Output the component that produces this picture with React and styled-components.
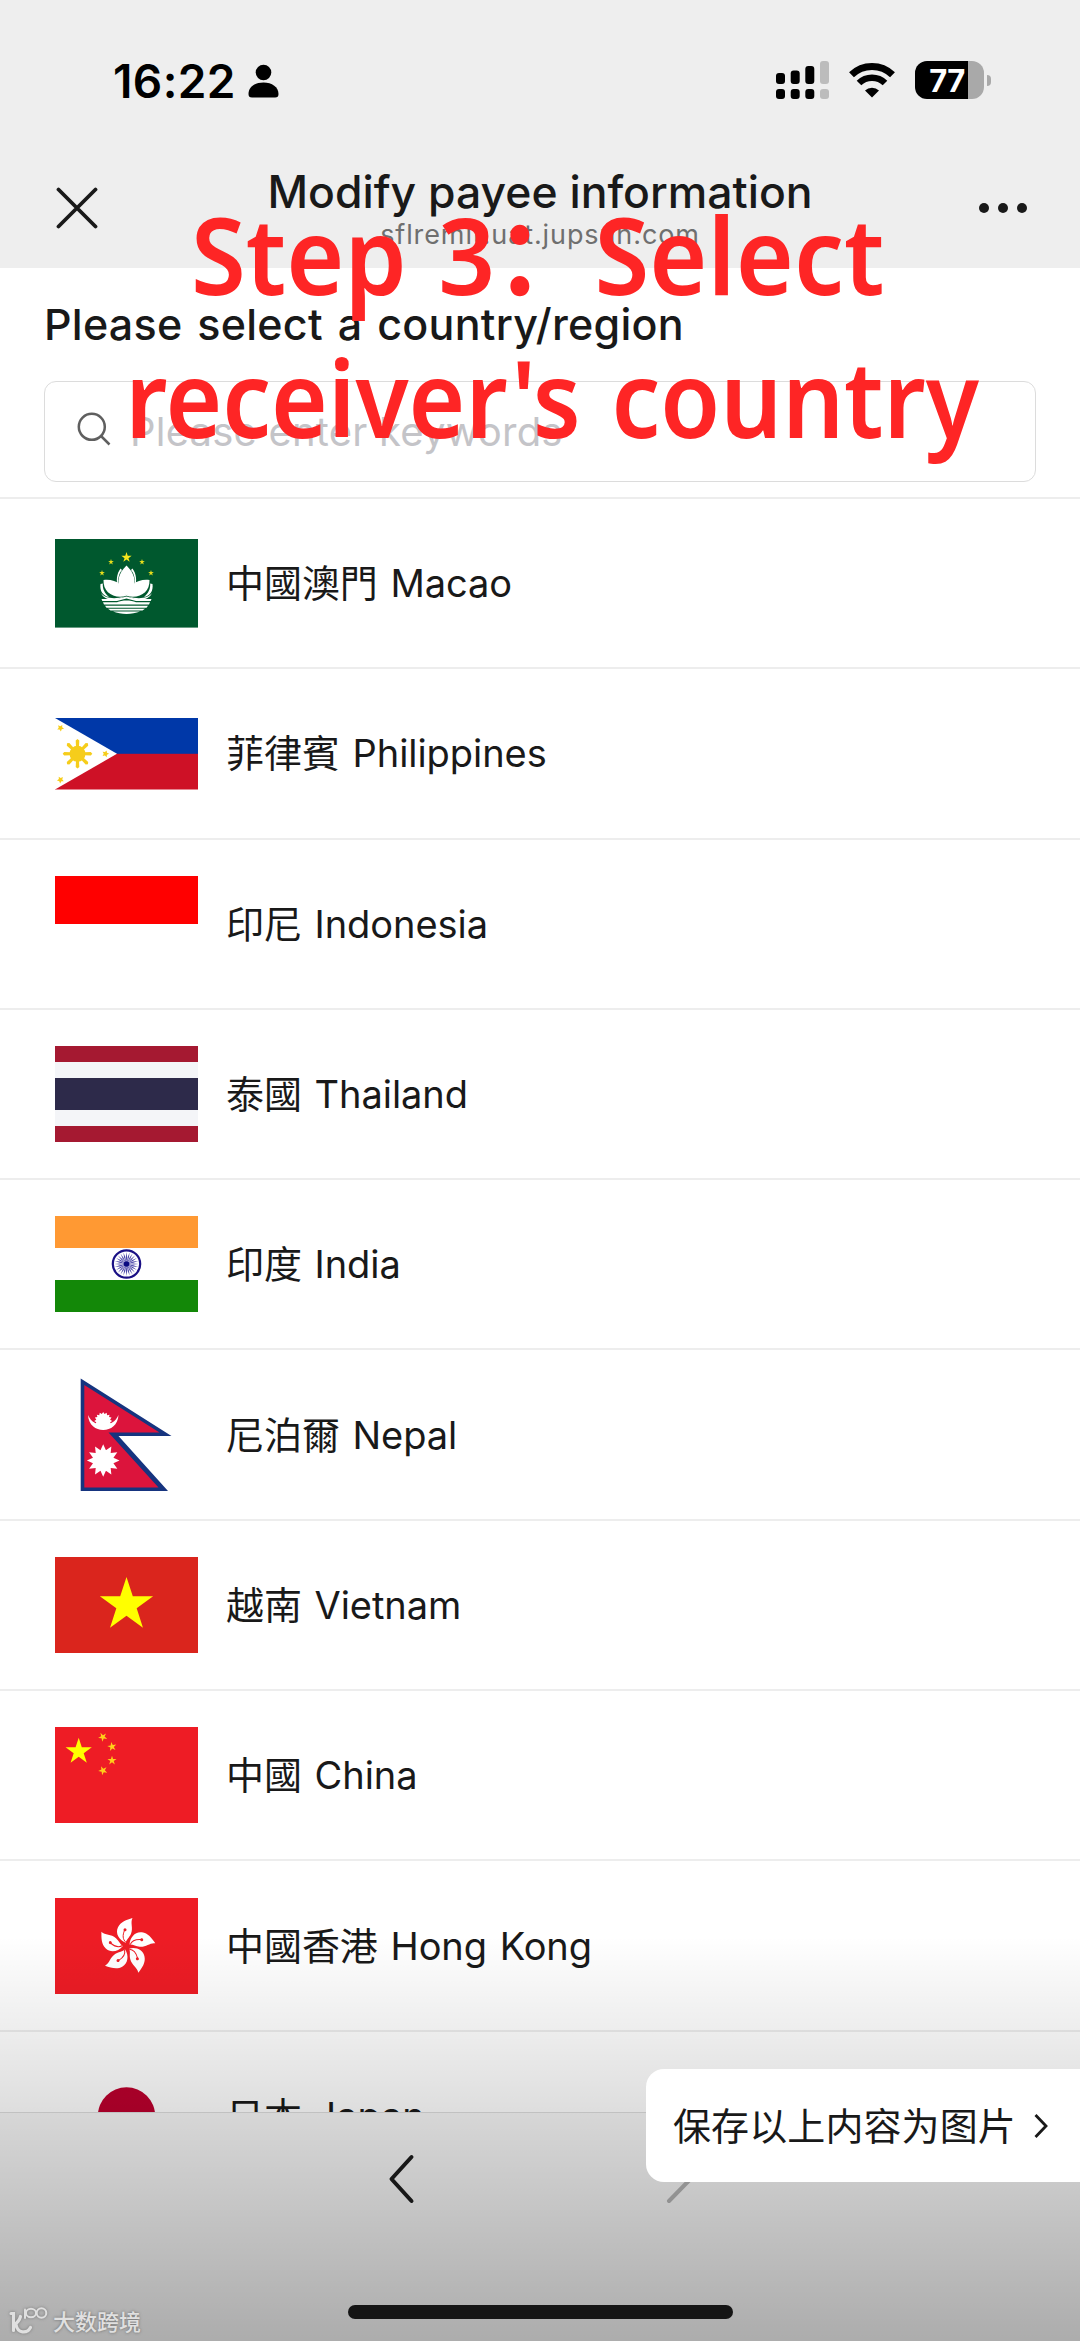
import React from "react";
import styled, { createGlobalStyle } from "styled-components";

const GlobalStyle = createGlobalStyle`
  * { box-sizing: border-box; }
  body { margin: 0; background: #fff; }
`;

const latin = `Inter, "Noto Sans CJK TC", sans-serif`;

const Screen = styled.div`
  position: relative;
  display: flex;
  flex-direction: column;
  width: 1080px;
  height: 2341px;
  overflow: hidden;
  background: #fff;
  color: #191919;
  font-family: ${latin};
`;

/* ---------- top chrome ---------- */

const TopChrome = styled.header`
  flex: none;
  height: 268px;
  padding-top: 58px;
  background: #eeeeee;
`;

const StatusBar = styled.div`
  display: flex;
  align-items: center;
  justify-content: space-between;
  height: 46px;
  padding: 0 89px 0 113px;
  color: #000;
`;

const StatusGroup = styled.div`
  display: flex;
  align-items: center;
  gap: ${(p) => p.$gap}px;
  padding-bottom: ${(p) => p.$lift || 0}px;
`;

const Clock = styled.span`
  font-size: 46px;
  line-height: 46px;
  font-weight: 600;
  letter-spacing: 0.4px;
`;

const Battery = styled.div`
  display: flex;
  align-items: center;
  gap: 3px;
`;

const BatteryBody = styled.div`
  display: flex;
  align-items: center;
  justify-content: center;
  width: 69px;
  height: 38px;
  padding-right: 5px;
  border-radius: 12px;
  background: linear-gradient(to right, #000 53px, #a9a9a9 53px);
  color: #fff;
  font-size: 31px;
  font-weight: 700;
  letter-spacing: -0.5px;
`;

const BatteryCap = styled.div`
  width: 4px;
  height: 11px;
  border-radius: 0 5px 5px 0;
  background: #a9a9a9;
`;

const NavBar = styled.div`
  display: grid;
  grid-template-columns: 160px 1fr 160px;
  height: 104px;
  margin-top: 54px;
`;

const NavSide = styled.div`
  display: flex;
  justify-content: ${(p) => (p.$end ? "flex-end" : "flex-start")};
  padding: ${(p) => (p.$end ? "44px 52px 0 0" : "29px 0 0 56px")};
`;

const NavCenter = styled.div`
  display: flex;
  flex-direction: column;
  align-items: center;
`;

const NavTitle = styled.h1`
  margin: 7px 0 0;
  font-size: 44.5px;
  line-height: 54px;
  font-weight: 500;
  letter-spacing: 0;
  white-space: nowrap;
`;

const NavHost = styled.span`
  margin-top: -1px;
  font-size: 27px;
  line-height: 34px;
  font-weight: 400;
  letter-spacing: 0.9px;
  color: #6f6f6f;
`;

/* ---------- page body ---------- */

const Body = styled.main`
  flex: none;
  height: 1844px;
  overflow: hidden;
`;

const Finder = styled.section`
  height: 229px;
  padding: 28px 44px 0;
`;

const Prompt = styled.h2`
  margin: 0;
  font-size: 43px;
  line-height: 56px;
  font-weight: 500;
  letter-spacing: 0.25px;
  word-spacing: 3.2px;
  white-space: nowrap;
`;

const SearchBox = styled.div`
  display: flex;
  align-items: center;
  gap: 19px;
  height: 101px;
  margin-top: 29px;
  padding-left: 32px;
  border: 1px solid #dcdcdc;
  border-radius: 12px;

  svg { margin-bottom: 5px; }
`;

const Placeholder = styled.span`
  font-size: 40px;
  line-height: 50px;
  letter-spacing: 0.2px;
  color: #c4c4c8;
`;

const Row = styled.div`
  display: flex;
  align-items: center;
  gap: 28px;
  height: 170.3px;
  padding-left: 55px;
  border-top: 2px solid #ededed;
`;

const FlagSvg = styled.svg`
  display: block;
  flex: none;
  overflow: visible;
`;

const Country = styled.span`
  font-size: 38px;
  line-height: 50px;
  word-spacing: 2px;
  letter-spacing: -0.05px;
  white-space: pre;
`;

/* ---------- bottom chrome ---------- */

const Toolbar = styled.footer`
  display: flex;
  flex-direction: column;
  align-items: center;
  justify-content: space-between;
  height: 229px;
  padding: 41px 0 22px;
  border-top: 1px solid #dedede;
  background: #f7f7f7;
`;

const HistoryButtons = styled.div`
  display: flex;
  gap: 251px;
`;

const HomeIndicator = styled.div`
  width: 385px;
  height: 14px;
  border-radius: 7px;
  background: #1d1d1d;
`;

/* ---------- things floating over the page ---------- */

const Shade = styled.div`
  position: absolute;
  left: 0;
  right: 0;
  bottom: 0;
  height: 405px;
  background: linear-gradient(to bottom, rgba(0, 0, 0, 0), rgba(0, 0, 0, 0.3));
`;

const SavePill = styled.div`
  position: absolute;
  right: 0;
  top: 2069px;
  display: flex;
  align-items: center;
  justify-content: space-between;
  width: 434px;
  height: 113px;
  padding: 0 31px 0 27px;
  border-radius: 18px 0 0 18px;
  background: #fff;
`;

const PillLabel = styled.span`
  padding-bottom: 5px;
  font-family: "Noto Sans CJK SC", sans-serif;
  font-size: 38px;
  letter-spacing: 0.1px;
  white-space: nowrap;
`;

const Caption = styled.div`
  position: absolute;
  left: 0;
  right: 0;
  top: 182px;
  display: flex;
  flex-direction: column;
  align-items: center;
  color: #fe2525;
  font-family: "Noto Sans", "Noto Sans CJK SC", sans-serif;
  font-size: 107px;
  font-weight: 600;
  line-height: 143px;
`;

const CaptionLine = styled.div`
  white-space: pre;
  word-spacing: ${(p) => p.$wordGap}px;
  transform: translateX(${(p) => p.$shift}px) scaleX(${(p) => p.$squeeze});
`;

const Watermark = styled.div`
  position: absolute;
  left: 9px;
  top: 2303px;
  display: flex;
  align-items: center;
  gap: 4px;
  color: #e0e0e0;
  font-family: "Noto Sans CJK SC", sans-serif;
  font-size: 22px;
  font-weight: 500;
  line-height: 34px;
  text-shadow: 0 0 3px #666;

  svg { filter: drop-shadow(0 0 1.5px #777); }
`;

/* ---------- drawings ---------- */

function star(cx, cy, r, n = 5, inner = 0.382, rot = -90) {
  return Array.from({ length: n * 2 }, (_, i) => {
    const a = ((rot + (i * 180) / n) * Math.PI) / 180;
    const q = i % 2 ? r * inner : r;
    return `${(cx + q * Math.cos(a)).toFixed(2)},${(cy + q * Math.sin(a)).toFixed(2)}`;
  }).join(" ");
}

const Star = ({ x, y, r, n, inner, rot, fill }) => (
  <polygon points={star(x, y, r, n, inner, rot)} fill={fill} />
);

const Macao = () => (
  <>
    <rect width="143" height="88.6" fill="#00582e" />
    <Star x={71.5} y={18.5} r={5.4} fill="#f8e71c" />
    {[[56, 23], [87, 23], [47, 34], [96, 34]].map(([x, y]) => (
      <Star key={x} x={x} y={y} r={3} fill="#e6dd1c" />
    ))}
    <g fill="#fff">
      <path d="M71.500 26.500C63.500 34 61.500 43 65 50L71.500 57L78 50C81.500 43 79.500 34 71.500 26.500Z" />
      <path d="M65.500 29.500C61.500 35 61 42 63 48C62.500 41 63.500 35 67 31Z" />
      <path d="M77.500 29.500C81.500 35 82 42 80 48C80.500 41 79.500 35 76 31Z" />
      <path d="M48.500 41C48 53 58 60 71 57C70.500 46 60 39.500 48.500 41Z" />
      <path d="M94.500 41C95 53 85 60 72 57C72.500 46 83 39.500 94.500 41Z" />
      <path d="M45.500 45C44.500 52 48 57 54 58C49.500 54 47.500 50 47.800 44.500Z" />
      <path d="M97.500 45C98.500 52 95 57 89 58C93.500 54 95.500 50 95.200 44.500Z" />
      <path d="M46 54C50 59.500 60 60.500 69 57.500C60 63 49 61.500 46 54Z" />
      <path d="M97 54C93 59.500 83 60.500 74 57.500C83 63 94 61.500 97 54Z" />
      <path d="M46.500 60H62L71.500 57.500L81 60H96.500L95.700 62H81L71.500 59.500L62 62H47.300Z" />
      <path d="M48 63.300H62C67 61 76 61 81 63.300H95L94 65.500H49Z" />
      <path d="M50 66.700H93L91.500 68.700H51.500Z" />
      <path d="M53 69.800H90L87.500 71.600H55.500Z" />
      <path d="M58 72.600H85C77 75.900 66 75.900 58 72.600Z" />
    </g>
  </>
);

const Philippines = () => (
  <>
    <rect width="143" height="36" fill="#0038a8" />
    <rect y="35.800" width="143" height="35.700" fill="#ce1126" />
    <path d="M0 0L62 35.800L0 71.500Z" fill="#fff" />
    <circle cx="22.500" cy="35.800" r="8" fill="#f6cd1b" />
    {Array.from({ length: 8 }, (_, i) => (
      <path
        key={i}
        d="M21 29L20.700 22.500L22.500 21L24.300 22.500L24 29Z"
        fill="#f6cd1b"
        transform={`rotate(${i * 45} 22.500 35.800)`}
      />
    ))}
    <Star x={5.5} y={10} r={3.6} inner={0.5} fill="#f6cd1b" rot={-60} />
    <Star x={5.5} y={61.8} r={3.6} inner={0.5} fill="#f6cd1b" rot={-120} />
    <Star x={50.5} y={35.8} r={3.6} inner={0.5} fill="#f6cd1b" rot={0} />
  </>
);

const Indonesia = () => <rect width="143" height="48" fill="#ff0000" />;

const Thailand = () => (
  <>
    <rect width="143" height="96" fill="#a51931" />
    <rect y="16" width="143" height="64" fill="#f4f5f8" />
    <rect y="32" width="143" height="32" fill="#2d2a4a" />
  </>
);

const India = () => (
  <>
    <rect width="143" height="32" fill="#ff9933" />
    <rect y="64" width="143" height="32" fill="#138808" />
    <circle cx="71.500" cy="48" r="13.700" fill="none" stroke="#1a1085" strokeWidth="2.200" />
    {Array.from({ length: 24 }, (_, i) => (
      <path
        key={i}
        d="M71.500 48L70.900 41L71.500 36L72.100 41Z"
        fill="#4a46a8"
        transform={`rotate(${i * 15} 71.500 48)`}
      />
    ))}
    <circle cx="71.500" cy="48" r="2.800" fill="#0a0a80" />
  </>
);

const Nepal = () => (
  <>
    <path d="M25.700 -0.500L116.500 57H63.500L113 112H25.700Z" fill="#16347f" />
    <path d="M29.300 6L104.500 53.600H53.500L103.500 108.600H29.300Z" fill="#dc143c" />
    <path d="M33 36C34 56 62.500 56 63.500 36C58 49.500 38.500 49.500 33 36Z" fill="#fff" />
    <Star x={48.2} y={42} r={9} n={16} inner={0.78} fill="#fff" />
    <Star x={48.2} y={81.5} r={16.3} n={12} inner={0.65} fill="#fff" />
  </>
);

const Vietnam = () => (
  <>
    <rect width="143" height="96" fill="#da251d" />
    <Star x={71.5} y={48} r={28} fill="#ffff00" />
  </>
);

const China = () => (
  <>
    <rect width="143" height="96" fill="#ee1c25" />
    <Star x={23.7} y={24.5} r={13.8} fill="#ffff00" />
    <Star x={47.8} y={10} r={4.8} rot={-120} fill="#ffcf1a" />
    <Star x={57} y={19.7} r={4.8} rot={-100} fill="#ffcf1a" />
    <Star x={57} y={33.5} r={4.8} fill="#ffcf1a" />
    <Star x={48} y={43.5} r={4.8} rot={-115} fill="#ffcf1a" />
  </>
);

const HongKong = () => (
  <>
    <rect width="143" height="96" fill="#ee1c25" />
    {Array.from({ length: 5 }, (_, i) => (
      <g key={i} transform={`translate(71.500 48.300) rotate(${i * 72})`}>
        <path
          d="M-.8 -3.500C-7.500 -6 -11.500 -13 -8.500 -19C-6 -24.500 0 -26.500 6 -28.300C3.500 -23.500 7 -18.500 4.500 -12.500C2.800 -8.500 0 -7 -.8 -3.500Z"
          fill="#fff"
        />
        <path d="M-.5 -4C-4 -7 -4 -11 -2 -16" fill="none" stroke="#ee1c25" strokeWidth="1" />
        <circle cx="-1.500" cy="-16.500" r="1.500" fill="#ee1c25" />
      </g>
    ))}
  </>
);

const Japan = () => <circle cx="71.500" cy="48" r="28.700" fill="#bc002d" />;

const COUNTRIES = [
  { label: "中國澳門 Macao", Flag: Macao, h: 88.6 },
  { label: "菲律賓 Philippines", Flag: Philippines, h: 71.5 },
  { label: "印尼 Indonesia", Flag: Indonesia, h: 96 },
  { label: "泰國 Thailand", Flag: Thailand, h: 96 },
  { label: "印度 India", Flag: India, h: 96 },
  { label: "尼泊爾 Nepal", Flag: Nepal, h: 112 },
  { label: "越南 Vietnam", Flag: Vietnam, h: 96 },
  { label: "中國 China", Flag: China, h: 96 },
  { label: "中國香港 Hong Kong", Flag: HongKong, h: 96 },
  { label: "日本 Japan", Flag: Japan, h: 96 },
];

const PersonIcon = () => (
  <svg width="31" height="34" viewBox="0 0 31 34">
    <circle cx="15.500" cy="8.500" r="7.800" fill="#000" />
    <path d="M0.500 30C0.500 23 7 18.500 15.500 18.500S30.500 23 30.500 30C30.500 32.500 29.500 33.500 27 33.500H4C1.500 33.500 .5 32.500 .5 30Z" fill="#000" />
  </svg>
);

const SignalIcon = () => (
  <svg width="53" height="38" viewBox="0 0 53 38">
    {[[0, 12], [14.7, 9.5], [29.3, 5], [44, 0]].map(([x, y], i) => (
      <g key={x} fill={i === 3 ? "#bcbcbc" : "#000"}>
        <rect x={x} y={y} width="9" height={23 - y} rx="3" />
        <rect x={x} y="28" width="9" height="10" rx="3" />
      </g>
    ))}
  </svg>
);

const WifiIcon = () => (
  <svg width="46" height="35" viewBox="0 0 46 35">
    <g fill="none" stroke="#000">
      <path d="M2.500 11.800A29.500 29.500 0 0 1 43.500 11.800" strokeWidth="7" />
      <path d="M10 20A18.500 18.500 0 0 1 36 20" strokeWidth="6.500" />
    </g>
    <path d="M23 34.500L16 27.500A10 10 0 0 1 30 27.500Z" fill="#000" />
  </svg>
);

const CloseIcon = () => (
  <svg width="42" height="42" viewBox="0 0 42 42">
    <path d="M2.500 2.500L39.500 39.500M39.500 2.500L2.500 39.500" stroke="#191919" strokeWidth="3.800" strokeLinecap="round" />
  </svg>
);

const MoreIcon = () => (
  <svg width="50" height="12" viewBox="0 0 50 12">
    {[6, 25, 44].map((x) => (
      <circle key={x} cx={x} cy="6" r="5" fill="#191919" />
    ))}
  </svg>
);

const SearchIcon = () => (
  <svg width="34" height="34" viewBox="0 0 34 34" fill="none" stroke="#5f5f5f" strokeWidth="2.500">
    <circle cx="14.800" cy="14.800" r="13" />
    <path d="M24 24L32.500 32.500" />
  </svg>
);

const HistoryChevron = ({ forward }) => (
  <svg width="27" height="50" viewBox="0 0 27 50" fill="none" strokeWidth="4" strokeLinecap="round" strokeLinejoin="round">
    <path d={forward ? "M3 3L24.500 25L3 47" : "M23.500 3L3.500 25L23.500 47"} stroke={forward ? "#b5b5b5" : "#1d1d1d"} />
  </svg>
);

const PillChevron = () => (
  <svg width="16" height="26" viewBox="0 0 16 26" fill="none">
    <path d="M2.500 2L13 13L2.500 24" stroke="#191919" strokeWidth="2.800" />
  </svg>
);

const WatermarkLogo = () => (
  <svg width="40" height="30" viewBox="0 0 40 30" fill="none" stroke="#e0e0e0" strokeLinecap="round">
    <path d="M2 8.500H4.500V25.500M5 20C8 18 10.500 15.500 11.500 11.500M7 19.500C8.500 28.500 18 29 21.500 22.500" strokeWidth="3.200" />
    <path d="M16 13V4.500" strokeWidth="2" />
    <ellipse cx="22" cy="8" rx="5" ry="4.300" strokeWidth="2" />
    <ellipse cx="32.500" cy="8" rx="4.800" ry="4.800" strokeWidth="2" />
  </svg>
);

export default function App() {
  return (
    <>
      <GlobalStyle />
      <Screen>
        <TopChrome>
          <StatusBar>
            <StatusGroup $gap={12}>
              <Clock>16:22</Clock>
              <PersonIcon />
            </StatusGroup>
            <StatusGroup $gap={20} $lift={2}>
              <SignalIcon />
              <WifiIcon />
              <Battery>
                <BatteryBody>77</BatteryBody>
                <BatteryCap />
              </Battery>
            </StatusGroup>
          </StatusBar>
          <NavBar>
            <NavSide>
              <CloseIcon />
            </NavSide>
            <NavCenter>
              <NavTitle>Modify payee information</NavTitle>
              <NavHost>sflremit.uat.jupsun.com</NavHost>
            </NavCenter>
            <NavSide $end>
              <MoreIcon />
            </NavSide>
          </NavBar>
        </TopChrome>

        <Body>
          <Finder>
            <Prompt>Please select a country/region</Prompt>
            <SearchBox>
              <SearchIcon />
              <Placeholder>Please enter keywords</Placeholder>
            </SearchBox>
          </Finder>
          {COUNTRIES.map(({ label, Flag, h }) => (
            <Row key={label}>
              <FlagSvg width="143" height={h} viewBox={`0 0 143 ${h}`}>
                <Flag />
              </FlagSvg>
              <Country>{label}</Country>
            </Row>
          ))}
        </Body>

        <Toolbar>
          <HistoryButtons>
            <HistoryChevron />
            <HistoryChevron forward />
          </HistoryButtons>
          <HomeIndicator />
        </Toolbar>

        <Shade />
        <SavePill>
          <PillLabel>保存以上内容为图片</PillLabel>
          <PillChevron />
        </SavePill>
        <Caption>
          <CaptionLine $squeeze={0.93} $shift={-2} $wordGap={6}>Step 3：Select</CaptionLine>
          <CaptionLine $squeeze={0.908} $shift={12} $wordGap={6}>receiver's country</CaptionLine>
        </Caption>
        <Watermark>
          <WatermarkLogo />
          大数跨境
        </Watermark>
      </Screen>
    </>
  );
}
